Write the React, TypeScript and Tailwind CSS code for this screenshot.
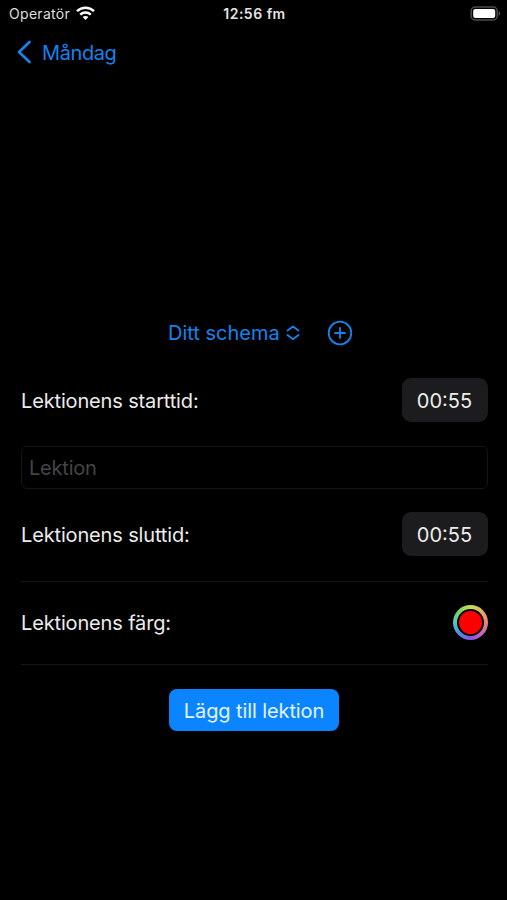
import type { ReactNode } from "react";

function StatusBar() {
  return (
    <header className="flex h-7 items-center justify-between pl-[9px] pr-[6px]">
      <div className="flex w-[160px] items-center gap-[6px]">
        <span className="text-[14px] leading-5 tracking-[0.3px] text-[#dedede]">Operatör</span>
        <svg width="19" height="14" viewBox="0 0 19 14" fill="none" stroke="#fff" strokeWidth="2.5" className="-mt-[2px]">
          <path d="M1 5.1C5.8.5 13.2.5 18 5.1" />
          <path d="M4.2 8.7c3-2.8 7.6-2.8 10.6 0" />
          <path d="M9.5 13.9 6.6 11.1c1.6-1.5 4.2-1.5 5.8 0Z" fill="#fff" stroke="none" />
        </svg>
      </div>
      <span className="-translate-x-[0.5px] text-[14px] font-semibold leading-5 tracking-[0.5px] text-[#e4e4e4]">12:56 fm</span>
      <div className="flex w-[160px] justify-end">
        <svg width="31" height="15" viewBox="0 0 31 15" fill="none" className="-mt-[2px]">
          <rect x="1.2" y="1" width="26" height="13" rx="4" stroke="#4c4c4e" strokeWidth="1.5" />
          <rect x="3.2" y="3" width="22" height="9" rx="2" fill="#fff" />
          <path d="M28.7 5.3c2 1 2 3.4 0 4.4Z" fill="#5b5b5d" />
        </svg>
      </div>
    </header>
  );
}

function Row({ label, children }: { label: string; children: ReactNode }) {
  return (
    <div className="flex h-11 items-center justify-between">
      <span className="pt-[2px] text-[20px] leading-6 tracking-[-0.15px] text-[#ececec]">{label}</span>
      {children}
    </div>
  );
}

function Time() {
  return (
    <button className="flex h-11 w-[86px] items-center justify-center rounded-[9px] bg-[#1c1c1e] pr-px pt-[2px] text-[20px] leading-6 text-[#ececec]">
      00:55
    </button>
  );
}

export default function App() {
  return (
    <main className="flex h-[900px] w-[507px] flex-col bg-black font-['Inter','Liberation_Sans',sans-serif] text-[20px]">
      <StatusBar />
      <nav className="flex h-12 items-center pl-[17px] text-[#1683ec]">
        <button className="flex items-center gap-[10px]">
          <svg width="15" height="24" viewBox="0 0 15 24" fill="none" stroke="currentColor" strokeWidth="2.7" strokeLinecap="round" strokeLinejoin="round">
            <path d="M12.5 2 2 12l10.5 10" />
          </svg>
          <span className="pt-px leading-6 tracking-[-0.4px]">Måndag</span>
        </button>
      </nav>
      <section className="mt-[244px] flex h-[26px] items-center pl-[168px] text-[#1683ec]">
        <button className="flex items-center gap-[6px]">
          <span className="leading-6">Ditt schema</span>
          <svg width="14" height="16" viewBox="0 0 14 16" fill="none" stroke="currentColor" strokeWidth="1.8" strokeLinecap="round" strokeLinejoin="round">
            <path d="m1.5 5.5 5.5-4L12.5 5.5M1.5 10l5.5 4.2 5.5-4.2" />
          </svg>
        </button>
        <button className="ml-[27px]" aria-label="Ny">
          <svg width="26" height="26" viewBox="0 0 26 26" fill="none" stroke="currentColor" strokeWidth="1.8" strokeLinecap="round">
            <circle cx="13" cy="13" r="11.3" />
            <path d="M13 8v10M8 13h10" />
          </svg>
        </button>
      </section>
      <form className="mt-8 flex flex-col pl-[21px] pr-[19px]" onSubmit={(e) => e.preventDefault()}>
        <Row label="Lektionens starttid:">
          <Time />
        </Row>
        <input
          className="mt-6 h-[43px] rounded-[6px] border border-[#151515] bg-transparent px-[7px] text-[20px] leading-6 tracking-[-0.2px] placeholder:text-[#454546] placeholder:opacity-100"
          placeholder="Lektion"
        />
        <div className="mt-[23px] border-b border-[#161617] pb-[25px]">
          <Row label="Lektionens sluttid:">
            <Time />
          </Row>
        </div>
        <div className="border-b border-[#161617] pb-5 pt-[18px]">
          <Row label="Lektionens färg:">
            <button
              className="flex size-[35px] items-center justify-center rounded-full bg-[conic-gradient(from_0deg,#c9d95a,#e0b45c_12%,#e3857a_25%,#c765b8_37%,#8a56dc_50%,#5487ea_62%,#52c8c0_75%,#70dc62_87%,#c9d95a)]"
              aria-label="Färg"
            >
              <span className="flex size-[27px] items-center justify-center rounded-full bg-black">
                <span className="size-[23px] rounded-full bg-[#ff0000]" />
              </span>
            </button>
          </Row>
        </div>
        <button className="ml-[148px] mt-6 h-[42px] w-[170px] rounded-[8px] bg-[#0a84ff] pt-px text-[20px] leading-6 tracking-[-0.1px] text-[#e4f3ff]">
          Lägg till lektion
        </button>
      </form>
    </main>
  );
}
